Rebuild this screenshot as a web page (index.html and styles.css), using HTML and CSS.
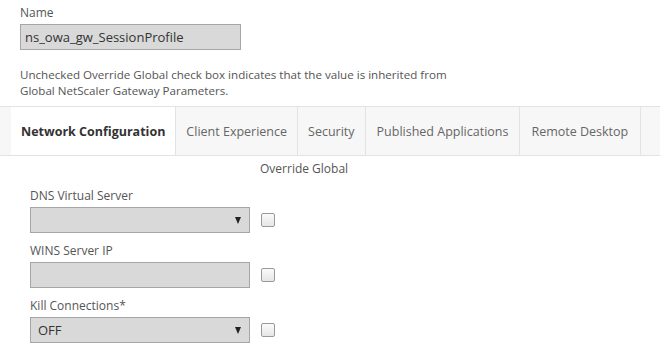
FILE: index.html
```html
<!DOCTYPE html>
<html lang="en">
<head>
    <meta charset="UTF-8">
    <title>Session Profile</title>
    <link rel="stylesheet" href="styles.css">
</head>
<body>
    <div class="header">
        <label class="field-label">Name</label>
        <div class="text-input name-input">ns_owa_gw_SessionProfile</div>
        <p class="note">Unchecked Override Global check box indicates that the value is inherited from<br>Global NetScaler Gateway Parameters.</p>
    </div>

    <div class="tabs">
        <div class="tab active">Network Configuration</div>
        <div class="tab">Client Experience</div>
        <div class="tab">Security</div>
        <div class="tab">Published Applications</div>
        <div class="tab">Remote Desktop</div>
    </div>

    <div class="panel">
        <div class="override-head">Override Global</div>

        <div class="form-group">
            <label class="field-label">DNS Virtual Server</label>
            <div class="row">
                <div class="text-input select"><span></span><span class="arrow"></span></div>
                <span class="checkbox"></span>
            </div>
        </div>
        <div class="form-group">
            <label class="field-label">WINS Server IP</label>
            <div class="row">
                <div class="text-input"></div>
                <span class="checkbox"></span>
            </div>
        </div>
        <div class="form-group">
            <label class="field-label">Kill Connections*</label>
            <div class="row">
                <div class="text-input select"><span>OFF</span><span class="arrow"></span></div>
                <span class="checkbox"></span>
            </div>
        </div>
    </div>
</body>
</html>
```

FILE: styles.css
```css
body {
    margin: 0;
    background: #fff;
    font-family: "Open Sans", Arial, sans-serif;
    font-size: 12px;
    color: #555;
}
.header {
    padding: 5px 20px 0 20px;
}
.field-label {
    display: block;
    line-height: 16px;
    margin-bottom: 3px;
}
.text-input {
    box-sizing: border-box;
    width: 220px;
    height: 26px;
    border: 1px solid #a6a6a6;
    background: #d9d9d9;
    color: #333;
    font-size: 13px;
    line-height: 24px;
    padding: 0 4px;
}
.name-input {
    width: 221px;
}
.note {
    margin: 17px 0 0 0;
    font-size: 11.6px;
    line-height: 16px;
}
.tabs {
    display: flex;
    margin-top: 7px;
    padding-left: 11px;
    background: #f7f7f7;
    border-top: 1px solid #e3e3e3;
    border-bottom: 1px solid #e3e3e3;
    height: 48px;
}
.tab {
    display: flex;
    align-items: center;
    padding: 0 10px 0 10px;
    border-right: 1px solid #e3e3e3;
    color: #666;
    font-size: 12.5px;
}
.tab:nth-child(4) {
    padding: 0 11px 0 11px;
}
.tab:nth-child(5) {
    padding: 0 12px 0 11px;
}
.tab.active {
    background: #fff;
    color: #333;
    font-weight: bold;
}
.panel {
    padding: 5px 30px 0 30px;
}
.override-head {
    padding-left: 230px;
    line-height: 16px;
    margin-bottom: 11px;
}
.form-group {
    margin-bottom: 10px;
}
.row {
    display: flex;
    align-items: center;
}
.select {
    display: flex;
    justify-content: space-between;
    align-items: center;
    padding: 0 8px 0 7px;
}
.arrow {
    width: 0;
    height: 0;
    border-left: 3.5px solid transparent;
    border-right: 3.5px solid transparent;
    border-top: 7px solid #222;
}
.checkbox {
    box-sizing: border-box;
    width: 14px;
    height: 14px;
    margin-left: 11px;
    border: 1px solid #999;
    border-radius: 2px;
    background: linear-gradient(#fafafa, #e6e6e6);
}
```
